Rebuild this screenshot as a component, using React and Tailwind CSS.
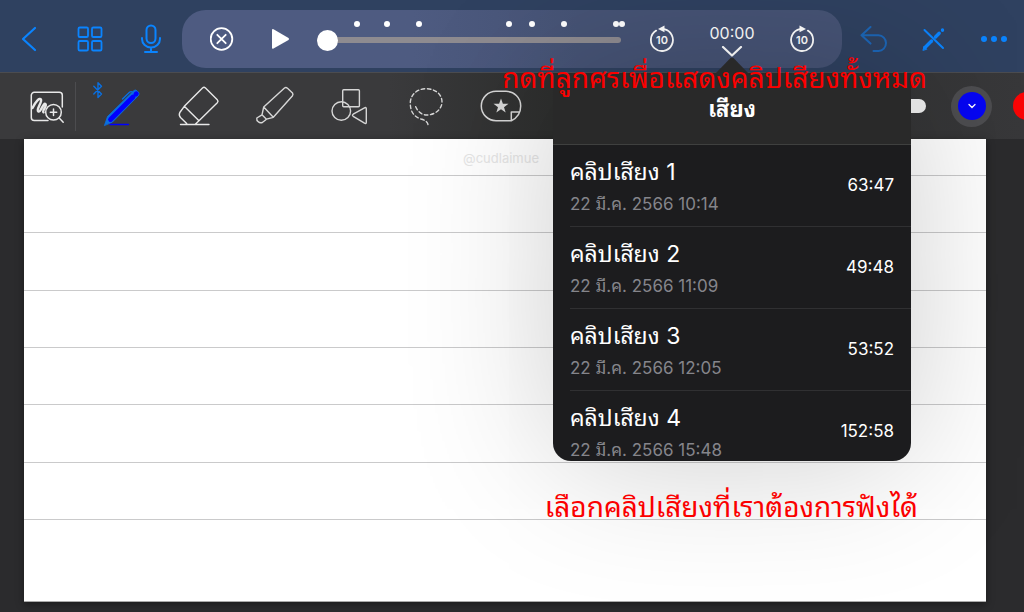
import { useState } from 'react';

const clips = [
  { id: 1, name: 'คลิปเสียง 1', date: '22 มี.ค. 2566 10:14', length: '63:47' },
  { id: 2, name: 'คลิปเสียง 2', date: '22 มี.ค. 2566 11:09', length: '49:48' },
  { id: 3, name: 'คลิปเสียง 3', date: '22 มี.ค. 2566 12:05', length: '53:52' },
  { id: 4, name: 'คลิปเสียง 4', date: '22 มี.ค. 2566 15:48', length: '152:58' },
];

// bookmarks along the recording, in percent of the track
const marks = [13, 23, 33.4, 63, 70.6, 81.4, 98.4, 100.3];

function IconButton({ label, children }) {
  return (
    <button aria-label={label} className="flex h-10 w-10 shrink-0 items-center justify-center text-[#0a84ff]">
      {children}
    </button>
  );
}

function Tool({ label, children }) {
  return (
    <button aria-label={label} className="h-12 w-[60px] shrink-0 text-[#d6d6d6]">
      <svg width="60" height="48" viewBox="0 0 60 48" fill="none" stroke="currentColor" strokeWidth="1.4" strokeLinecap="round" strokeLinejoin="round">
        {children}
      </svg>
    </button>
  );
}

function SkipButton({ label, forward }) {
  return (
    <button aria-label={label} className="shrink-0 text-white">
      <svg width="26" height="30" viewBox="0 0 26 30" fill="none" stroke="currentColor" strokeWidth="1.8" strokeLinecap="round">
        {forward ? (
          <>
            <path d="M11 5.2A11 11 0 1 0 18.8 6.6" />
            <path d="M10.5 1.5v6.8l6.5-3.4z" fill="currentColor" stroke="none" />
          </>
        ) : (
          <>
            <path d="M15 5.2A11 11 0 1 1 7.2 6.6" />
            <path d="M15.5 1.5v6.8L9 4.9z" fill="currentColor" stroke="none" />
          </>
        )}
        <text x="13" y="20" textAnchor="middle" fontSize="11" fontWeight="600" fill="currentColor" stroke="none">10</text>
      </svg>
    </button>
  );
}

function ClipList() {
  return (
    <div className="absolute top-[47px] left-1/2 w-[358px] -translate-x-1/2">
      <svg className="mx-auto block" width="32" height="16" viewBox="0 0 32 16">
        <path d="M0 16L14.5 1Q16 0 17.5 1L32 16z" fill="#292929" />
      </svg>
      <div className="max-h-[388px] overflow-hidden rounded-b-[18px] bg-[#1c1c1e] shadow-[0_0_150px_rgba(0,0,0,0.2)]">
        <h2 className="flex h-[72px] items-center justify-center border-b border-[#3f403f] bg-[#292929] pt-0.5 text-[22px] font-bold text-white">
          เสียง
        </h2>
        <ul className="pl-[17px]">
          {clips.map((clip) => (
            <li key={clip.id} className="border-b border-[#303032]">
              <button className="flex h-[81px] w-full items-center justify-between pr-[17px] text-left">
                <span className="pt-1">
                  <span className="block text-[23px] leading-8 text-white">{clip.name}</span>
                  <span className="block text-[17px] leading-8 text-[#85858b]">{clip.date}</span>
                </span>
                <span className="text-[17px] text-white">{clip.length}</span>
              </button>
            </li>
          ))}
        </ul>
      </div>
    </div>
  );
}

export default function App() {
  const [position, setPosition] = useState(0);
  const [open, setOpen] = useState(true);

  return (
    <div className="relative flex min-h-screen flex-col overflow-hidden bg-[#2b2b2d] font-[Inter,'Noto_Sans_Thai_Looped',Loma,'Noto_Sans_Thai','Noto_Sans',sans-serif]">
      <header className="relative z-10 flex h-[73px] items-center border-b border-[#4b4c50] bg-[#2f4160] pt-1.5 pr-[10px] pl-[9px]">
        <div className="flex gap-[21px]">
          <IconButton label="ย้อนกลับ">
            <svg width="16" height="26" viewBox="0 0 16 26" fill="none" stroke="currentColor" strokeWidth="2.2" strokeLinecap="round" strokeLinejoin="round">
              <path d="M14 2L2 13L14 24" />
            </svg>
          </IconButton>
          <IconButton label="หน้าทั้งหมด">
            <svg width="26" height="26" viewBox="0 0 26 26" fill="none" stroke="currentColor" strokeWidth="1.8">
              <rect x="1.5" y="1.5" width="9.5" height="9.5" rx="1.3" />
              <rect x="15" y="1.5" width="9.5" height="9.5" rx="1.3" />
              <rect x="1.5" y="15" width="9.5" height="9.5" rx="1.3" />
              <rect x="15" y="15" width="9.5" height="9.5" rx="1.3" />
            </svg>
          </IconButton>
          <IconButton label="ไมโครโฟน">
            <svg width="20" height="30" viewBox="0 0 20 30" fill="none" stroke="currentColor" strokeWidth="2" strokeLinecap="round">
              <rect x="5.5" y="1.5" width="9" height="17.5" rx="4.5" />
              <path d="M1 14v1a9 8.5 0 0 0 18 0v-1M10 23.5v4M4 28h12" />
            </svg>
          </IconButton>
        </div>

        <div className="ml-[11px] flex h-[58px] flex-1 items-center rounded-3xl bg-linear-to-r from-[#4e5b81] from-35% to-[#465375] to-60% pr-[27px] pl-7">
          <button aria-label="ปิด" className="shrink-0 text-white">
            <svg width="24" height="24" viewBox="0 0 24 24" fill="none" stroke="currentColor" strokeWidth="1.8" strokeLinecap="round">
              <circle cx="11.5" cy="12" r="10.8" />
              <path d="M7.3 7.8l8.4 8.4M15.7 7.8l-8.4 8.4" />
            </svg>
          </button>
          <button aria-label="เล่น" className="ml-9 shrink-0 text-white">
            <svg width="20" height="22" viewBox="0 0 20 22">
              <path d="M2 2.3Q2 .6 3.5 1.3L18.5 10Q19.7 11 18.5 12L3.5 20.6Q2 21.3 2 19.7z" fill="currentColor" />
            </svg>
          </button>
          <div className="relative ml-[27px] flex flex-1 items-center">
            {marks.map((mark) => (
              <span key={mark} className="absolute -top-3.5 h-1.5 w-1.5 -translate-x-1/2 rounded-full bg-white" style={{ left: `${mark}%` }} />
            ))}
            <input
              type="range"
              aria-label="ตำแหน่งการเล่น"
              min="0"
              max="100"
              value={position}
              onChange={(e) => setPosition(Number(e.target.value))}
              className="mt-0.5 h-1.5 w-full appearance-none rounded-full bg-[#8e8b90] [&::-webkit-slider-thumb]:h-[21px] [&::-webkit-slider-thumb]:w-[21px] [&::-webkit-slider-thumb]:appearance-none [&::-webkit-slider-thumb]:rounded-full [&::-webkit-slider-thumb]:bg-white"
            />
          </div>
          <div className="ml-7 flex items-center self-stretch">
            <SkipButton label="ย้อน 10 วินาที" />
            <div className="relative mx-8 flex self-stretch">
              <button aria-expanded={open} onClick={() => setOpen(!open)} className="flex w-[50px] flex-col items-center pt-3 text-base leading-[22px] text-white">
                00:00
                <svg className="mt-0.5" width="22" height="12" viewBox="0 0 22 12" fill="none" stroke="currentColor" strokeWidth="2.2" strokeLinecap="round" strokeLinejoin="round">
                  <path d="M2 1L11 9.5L20 1" />
                </svg>
              </button>
              {open && <ClipList />}
            </div>
            <SkipButton label="ข้าม 10 วินาที" forward />
          </div>
        </div>

        <div className="ml-3 flex gap-5">
          <IconButton label="เลิกทำ">
            <svg className="opacity-50" width="28" height="28" viewBox="0 0 28 28" fill="none" stroke="currentColor" strokeWidth="2" strokeLinecap="round" strokeLinejoin="round">
              <path d="M10.5 2L1.5 10.3L10.5 18.6M1.5 10.3H18.5a7.5 7.8 0 0 1 0 15.6h-5" />
            </svg>
          </IconButton>
          <IconButton label="โหมดอ่าน">
            <svg width="26" height="26" viewBox="0 0 26 26" fill="none" stroke="currentColor" strokeLinecap="round">
              <path d="M3.5 4L22 22" strokeWidth="2" />
              <path d="M4 21.5L10.5 15" strokeWidth="3.4" />
              <path d="M2 24l1-3.5l2.5 2.5z" fill="currentColor" strokeWidth="1" />
              <path d="M14.5 11L18.2 7.3M21.5 4.2v-.2" strokeWidth="3.4" />
            </svg>
          </IconButton>
          <IconButton label="เพิ่มเติม">
            <svg width="28" height="8" viewBox="0 0 28 8" fill="currentColor">
              <circle cx="4" cy="4" r="3" />
              <circle cx="14" cy="4" r="3" />
              <circle cx="24" cy="4" r="3" />
            </svg>
          </IconButton>
        </div>
      </header>

      <div className="flex h-[66px] items-center overflow-hidden bg-linear-to-r from-[#3a3a3c] from-38% via-[#2d2e2d] via-55% to-[#38383a] pl-[27px]">
        <button aria-label="ซูม" className="w-10 shrink-0 text-[#e8e8e8]">
          <svg width="40" height="48" viewBox="0 0 40 48" fill="none" stroke="currentColor" strokeWidth="1.5" strokeLinecap="round" strokeLinejoin="round">
            <path d="M21 38.5H7.3a3 3 0 0 1-3-3V13.3a3 3 0 0 1 3-3h25a3 3 0 0 1 3 3V25" />
            <path d="M5.5 26C9 19 12.5 15.5 14 17.5C15.5 20 8.5 28 11.3 29.5C14 30.5 16 20.5 18.5 22C20.5 24 14.5 29 16.5 30.3" strokeWidth="2.4" />
            <circle cx="26.5" cy="30.3" r="7.8" />
            <path d="M32.2 36l4 4.2M23.3 30.3h6.4M26.5 27.1v6.4" />
          </svg>
        </button>
        <div className="ml-2 h-[49px] w-px shrink-0 bg-[#4c4c4f]" />
        <div className="ml-4 flex gap-4">
          <Tool label="ปากกา">
            {/* bluetooth mark, then the pen itself */}
            <path d="M1.8 4.2L9.5 12L6 15.5V.7L9.5 4.2L1.8 12" stroke="#0a6fe0" />
            <path d="M30.5 17L37.5 10.2Q39 9 41.5 10.5" stroke="#0a6fe0" />
            <path d="M12.5 43.3L15.5 34.5L42 8.5Q43.5 7.3 45 8.8L46.5 10.3Q47.8 12 46.5 13.5L20.5 40z" fill="#0a6fe0" stroke="#0a6fe0" strokeWidth="0.8" />
            <path d="M18.5 37.5L41 15M44 12L44.3 11.7" stroke="#0000ff" strokeWidth="4.8" />
            <path d="M18 42.5H36.5" stroke="#0000ff" />
          </Tool>
          <Tool label="ยางลบ">
            <path d="M16.3 24.3L34.5 6Q36 4.7 37.5 6L49.3 17.7Q50.7 19.2 49.3 20.7L31 38.7zM16.3 24.3L11.8 30.5Q10.5 33 12.5 35.5L18.7 41.5M31 38.7L27.5 42M12.5 42.5H41" stroke="#e8e8e8" />
          </Tool>
          <Tool label="ปากกาเน้นข้อความ">
            <path d="M19.7 25L40.5 6Q42 4.8 43.5 6.3L48.5 11Q49.5 12.5 48.3 14L29.3 35.3zM19.7 25L18 32.8L22.5 37.2L29.3 35.3M18 32.8L12.8 36Q12.5 38.5 14 39.5Q16 41.5 18.3 40.5L22.5 37.2" />
          </Tool>
          <Tool label="รูปร่าง">
            <rect x="22.7" y="7.7" width="16.7" height="17" rx="1" />
            <circle cx="21.3" cy="29" r="9.3" />
            <path d="M44.5 25.8Q46.3 24.8 46.3 26.8V40.2Q46.3 42.2 44.5 41.2L33.2 34.3Q31.8 33.2 33.2 32.2z" />
          </Tool>
          <Tool label="บ่วงบาศ">
            <path d="M19.7 24.7C22 30 26 33 31 33C39 33 46 27 46 20C46 12 39 6.7 30 6.7C21 6.7 14.3 13 14.3 21C14.3 30 18 34.5 25 37C29 38.2 31.5 40 32 42.5" strokeDasharray="3.5 2.6" />
          </Tool>
          <Tool label="สติกเกอร์">
            <path d="M39.3 38.7H24a14.7 14.7 0 0 1 0-29.4H34C42 9.3 48.7 15.5 48.7 24C48.7 31 45 36 39.3 38.7V30H47" strokeWidth="1.5" />
            <path d="M29 16.5l1.9 5.3h5.6l-4.5 3.4l1.7 5.4l-4.7-3.3l-4.7 3.3l1.7-5.4l-4.5-3.4h5.6z" fill="currentColor" stroke="none" />
          </Tool>
        </div>
        <div className="-mr-[17px] ml-auto flex shrink-0 items-center">
          <button aria-label="ความหนาเส้น" className="h-3.5 w-8 rounded-full bg-[#f0f0f0]" />
          <button aria-label="สีน้ำเงิน" className="ml-[25px] flex h-[41px] w-[41px] items-center justify-center rounded-full bg-[#4d4d50]">
            <span className="flex h-7 w-7 items-center justify-center rounded-full bg-[#0505f5]">
              <svg width="8" height="6" viewBox="0 0 8 6" fill="none" stroke="#fff" strokeWidth="1.3" strokeLinecap="round">
                <path d="M1 1.5L4 4.5L7 1.5" />
              </svg>
            </span>
          </button>
          <button aria-label="สีแดง" className="ml-[21px] h-7 w-7 rounded-full bg-[#fa0505]" />
        </div>
      </div>

      {/* ruled page */}
      <main className="mr-[38px] mb-[10px] ml-6 flex flex-1 flex-col border-b border-[#aaa] bg-white shadow-[0_2px_8px_rgba(0,0,0,0.4)]">
        <div className="flex h-[37px] items-center justify-end border-b border-[#cacacb] pt-1 pr-[447px] text-[13px] text-[#e6e6e6]">
          @cudlaimue
        </div>
        {[1, 2, 3, 4, 5, 6].map((line) => (
          <div key={line} className="flex-1 border-b border-[#cacacb]" />
        ))}
        <div className="h-[81px]" />
      </main>

      <p className="absolute top-[60px] right-[97px] z-20 text-[28px] leading-9 whitespace-nowrap text-[#fb0000]">
        กดที่ลูกศรเพื่อแสดงคลิปเสียงทั้งหมด
      </p>
      <p className="absolute top-[489px] right-[106px] z-20 text-[28px] leading-9 whitespace-nowrap text-[#fb0000]">
        เลือกคลิปเสียงที่เราต้องการฟังได้
      </p>
    </div>
  );
}
